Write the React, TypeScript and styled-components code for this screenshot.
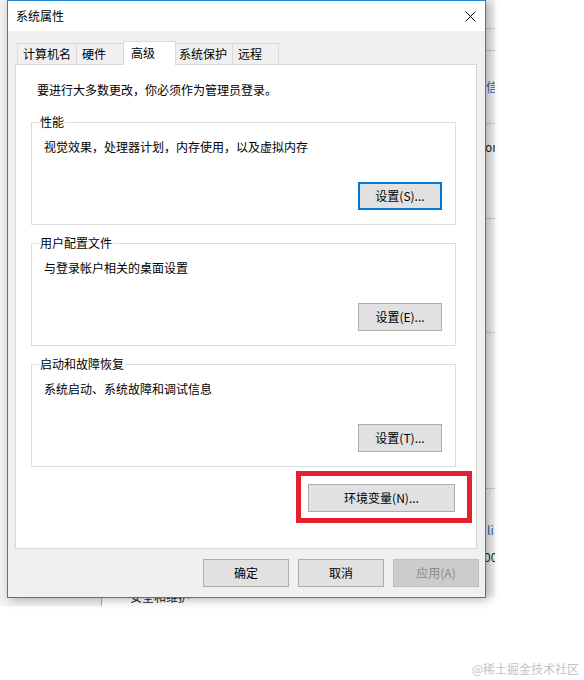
import React from "react";
import styled, { createGlobalStyle } from "styled-components";

const GlobalStyle = createGlobalStyle`
  html, body { margin: 0; padding: 0; background: #fff; }
  body {
    font-family: "Noto Sans CJK SC", "Noto Sans", sans-serif;
    font-size: 12px;
    color: #000;
  }
  * { box-sizing: border-box; }
`;

const Desktop = styled.div`
  position: relative;
  width: 584px;
  height: 680px;
  overflow: hidden;
  background: #fff;
`;

/* ---------- background window (System control panel, mostly hidden) ---------- */
const BackWindow = styled.div`
  position: absolute;
  left: 0;
  top: 0;
  width: 495px;
  height: 606px;
  overflow: hidden;
  display: flex;
  background: #fff;
`;

const BackNav = styled.div`
  flex: none;
  width: 102px;
  background: #f2f2f2;
  border-right: 1px solid #a3a3a3;
`;

const BackMain = styled.div`
  flex: 1;
  display: flex;
  flex-direction: column;
  background: #f3f3f3;
`;

const BackRow = styled.div<{ $h?: number; $pt?: number; $last?: boolean }>`
  flex: ${(p) => (p.$last ? "1" : "none")};
  display: flex;
  flex-direction: column;
  height: ${(p) => (p.$h ? `${p.$h}px` : "auto")};
  padding-top: ${(p) => p.$pt ?? 0}px;
  border-bottom: ${(p) => (p.$last ? "none" : "1px solid #cbcbcb")};
  background: ${(p) =>
    p.$last ? "linear-gradient(to bottom, #f3f3f3 0, #f3f3f3 108px, #fff 108px)" : "transparent"};
`;

const BackLine = styled.div<{ $pl: number; $mt?: number; $link?: boolean }>`
  padding-left: ${(p) => p.$pl}px;
  margin-top: ${(p) => p.$mt ?? 0}px;
  line-height: 16px;
  white-space: nowrap;
  color: ${(p) => (p.$link ? "#1f5fb4" : "#1a1a1a")};
`;

/* ---------- dialog ---------- */
const Dialog = styled.div`
  position: absolute;
  left: 7px;
  top: 0;
  width: 479px;
  height: 598px;
  display: flex;
  flex-direction: column;
  background: #f0f0f0;
  border: 1px solid #1c84d4;
  box-shadow: 3px 1px 10px rgba(0, 0, 0, 0.32);
`;

const TitleBar = styled.div`
  flex: none;
  height: 30px;
  display: flex;
  align-items: center;
  justify-content: space-between;
  padding-left: 8px;
  background: #fff;
`;

const Title = styled.span`
  font-size: 12px;
  line-height: 16px;
`;

const CloseButton = styled.div`
  width: 30px;
  height: 30px;
  display: flex;
  align-items: center;
  justify-content: center;
`;

const Body = styled.div`
  flex: 1;
  display: flex;
  flex-direction: column;
  padding-top: 10px;
`;

const TabStrip = styled.div`
  flex: none;
  height: 23px;
  display: flex;
  align-items: flex-end;
  padding-left: 9px;
`;

const Tab = styled.div<{ $w: number; $active?: boolean }>`
  position: relative;
  flex: none;
  width: ${(p) => p.$w}px;
  height: ${(p) => (p.$active ? 24 : 21)}px;
  margin-left: ${(p) => (p.$active ? -3 : -1)}px;
  margin-right: ${(p) => (p.$active ? -2 : 0)}px;
  margin-bottom: ${(p) => (p.$active ? -1 : 0)}px;
  z-index: ${(p) => (p.$active ? 2 : 1)};
  display: flex;
  align-items: center;
  padding-left: ${(p) => (p.$active ? 7 : 5)}px;
  padding-bottom: ${(p) => (p.$active ? 1 : 0)}px;
  background: ${(p) => (p.$active ? "#fff" : "#f0f0f0")};
  border: 1px solid #d9d9d9;
  border-bottom: none;
  line-height: 16px;
  white-space: nowrap;

  &:first-child {
    margin-left: 0;
  }
`;

const Panel = styled.div`
  flex: none;
  height: 485px;
  margin: 0 8px 0 7px;
  display: flex;
  flex-direction: column;
  padding: 17px 20px 0 15px;
  background: #fff;
  border: 1px solid #d9d9d9;
`;

const InfoText = styled.div`
  margin: 0 0 24px 6px;
  line-height: 16px;
`;

const GroupBox = styled.div`
  position: relative;
  flex: none;
  height: 103px;
  display: flex;
  flex-direction: column;
  align-items: flex-end;
  justify-content: space-between;
  padding: 16px 13px 14px 12px;
  border: 1px solid #dcdcdc;

  & + & {
    margin-top: 18px;
  }
`;

const GroupTitle = styled.span`
  position: absolute;
  top: -9px;
  left: 7px;
  padding: 0 1px;
  background: #fff;
  line-height: 16px;
`;

const GroupText = styled.div`
  align-self: stretch;
  line-height: 16px;
`;

const Button = styled.button<{ $w: number; $default?: boolean }>`
  flex: none;
  width: ${(p) => p.$w}px;
  height: 28px;
  padding: 0;
  font-family: inherit;
  font-size: 12px;
  line-height: 16px;
  color: #000;
  background: #e1e1e1;
  border: 1px solid ${(p) => (p.$default ? "#0078d7" : "#adadad")};
  box-shadow: ${(p) => (p.$default ? "inset 0 0 0 1px #0078d7" : "none")};
  border-radius: 0;

  &:disabled {
    color: #8b8b8b;
    background: #cccccc;
    border-color: #bfbfbf;
  }
`;

const EnvRow = styled.div`
  display: flex;
  justify-content: flex-end;
  margin-top: 17px;
  padding-right: 1px;
`;

const Highlight = styled.div`
  position: relative;
  display: flex;
`;

const HighlightFrame = styled.div`
  position: absolute;
  top: -13px;
  left: -12px;
  right: -17px;
  bottom: -11px;
  border: 5px solid #e5202e;
  pointer-events: none;
`;

const Footer = styled.div`
  flex: 1;
  display: flex;
  align-items: center;
  justify-content: flex-end;
  gap: 9px;
  padding: 0 6px;
`;

const Watermark = styled.div`
  position: absolute;
  right: 5px;
  top: 661px;
  font-size: 12px;
  line-height: 16px;
  color: #c3c3c3;
  white-space: nowrap;
`;

const CloseIcon = () => (
  <svg width="11" height="11" viewBox="0 0 11 11">
    <path d="M0.5 0.5 L10.5 10.5 M10.5 0.5 L0.5 10.5" stroke="#000" strokeWidth="1" fill="none" />
  </svg>
);

const tabs = [
  { label: "计算机名", w: 60 },
  { label: "硬件", w: 50 },
  { label: "高级", w: 53, active: true },
  { label: "系统保护", w: 60 },
  { label: "远程", w: 47 },
];

const groups = [
  { title: "性能", text: "视觉效果，处理器计划，内存使用，以及虚拟内存", button: "设置(S)...", def: true },
  { title: "用户配置文件", text: "与登录帐户相关的桌面设置", button: "设置(E)..." },
  { title: "启动和故障恢复", text: "系统启动、系统故障和调试信息", button: "设置(T)..." },
];

export default function App() {
  return (
    <>
      <GlobalStyle />
      <Desktop>
        <BackWindow>
          <BackNav />
          <BackMain>
            <BackRow $h={29} />
            <BackRow $h={22} />
            <BackRow $h={73} $pt={28}>
              <BackLine $pl={384} $link>
                信息
              </BackLine>
            </BackRow>
            <BackRow $h={95} $pt={15}>
              <BackLine $pl={383}>on</BackLine>
            </BackRow>
            <BackRow $h={114} />
            <BackRow $h={156} />
            <BackRow $last $pt={33}>
              <BackLine $pl={385} $link>
                li
              </BackLine>
              <BackLine $pl={382} $mt={11}>
                00
              </BackLine>
              <BackLine $pl={28} $mt={24}>
                安全和维护
              </BackLine>
            </BackRow>
          </BackMain>
        </BackWindow>

        <Dialog>
          <TitleBar>
            <Title>系统属性</Title>
            <CloseButton>
              <CloseIcon />
            </CloseButton>
          </TitleBar>
          <Body>
            <TabStrip>
              {tabs.map((t) => (
                <Tab key={t.label} $w={t.w} $active={t.active}>
                  {t.label}
                </Tab>
              ))}
            </TabStrip>
            <Panel>
              <InfoText>要进行大多数更改，你必须作为管理员登录。</InfoText>
              {groups.map((g) => (
                <GroupBox key={g.title}>
                  <GroupTitle>{g.title}</GroupTitle>
                  <GroupText>{g.text}</GroupText>
                  <Button $w={84} $default={g.def}>
                    {g.button}
                  </Button>
                </GroupBox>
              ))}
              <EnvRow>
                <Highlight>
                  <Button $w={147}>环境变量(N)...</Button>
                  <HighlightFrame />
                </Highlight>
              </EnvRow>
            </Panel>
            <Footer>
              <Button $w={86}>确定</Button>
              <Button $w={86}>取消</Button>
              <Button $w={86} disabled>
                应用(A)
              </Button>
            </Footer>
          </Body>
        </Dialog>

        <Watermark>@稀土掘金技术社区</Watermark>
      </Desktop>
    </>
  );
}
